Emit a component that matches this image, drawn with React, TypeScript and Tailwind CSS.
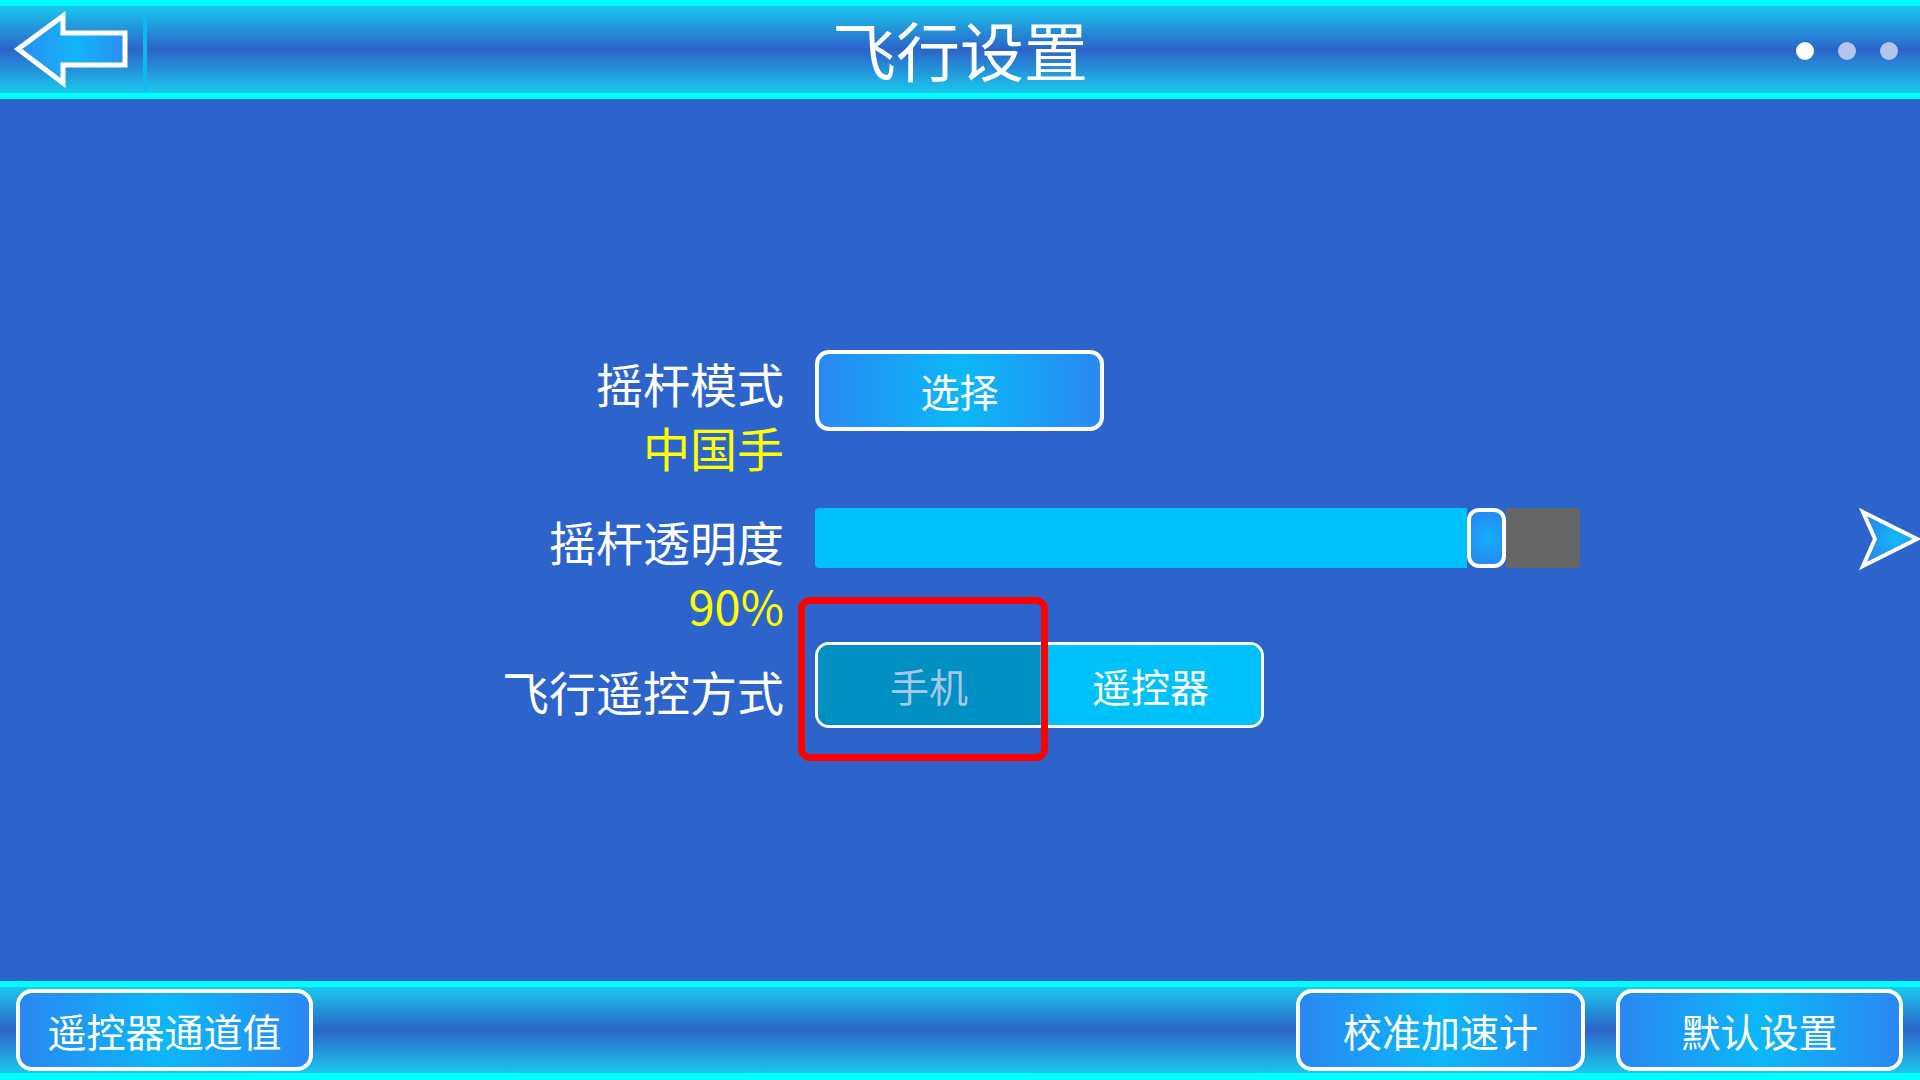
import React from 'react'

const btnGrad =
  'bg-[linear-gradient(to_right,#2a88f4,#0bb8f8_50%,#2a88f4)]'

function BackArrow() {
  return (
    <svg width="130" height="99" viewBox="0 0 130 99" className="shrink-0">
      <defs>
        <linearGradient id="backg" x1="0" y1="0" x2="1" y2="0">
          <stop offset="0" stopColor="#2a8ef5" />
          <stop offset="0.55" stopColor="#12b4f8" />
          <stop offset="1" stopColor="#2a8ef5" />
        </linearGradient>
      </defs>
      <polygon
        points="18,49 63,16 63,33 125,33 125,65 63,65 63,83"
        fill="url(#backg)"
        stroke="#ffffff"
        strokeWidth="5"
        strokeLinejoin="miter"
      />
    </svg>
  )
}

function NextArrow() {
  return (
    <svg width="62" height="64" viewBox="0 0 62 64" className="shrink-0">
      <defs>
        <radialGradient id="nextg" cx="0.6" cy="0.5" r="0.6">
          <stop offset="0" stopColor="#14b8f8" />
          <stop offset="1" stopColor="#2a84f0" />
        </radialGradient>
      </defs>
      <polygon
        points="5,5 59,32 5,59 17,32"
        fill="url(#nextg)"
        stroke="#ffffff"
        strokeWidth="4"
      />
    </svg>
  )
}

export default function App() {
  return (
    <div className="w-[1920px] h-[1080px] flex flex-col overflow-hidden bg-[#2d64cc] font-['Noto_Sans_CJK_SC','Noto_Sans',sans-serif] text-white">
      {/* header */}
      <header className="h-[99px] shrink-0 border-t-[6px] border-b-[6px] border-[#00ffff] bg-[linear-gradient(to_bottom,#1ac8ee,#2c64c9_50%,#1ac8ee)] grid grid-cols-[1fr_auto_1fr] items-center">
        <div className="flex items-center -mt-[6px]">
          <BackArrow />
          <div className="ml-[13px] mt-[6px] w-[4px] h-[76px] bg-[#12b6f2]" />
        </div>
        <h1 className="text-[64px] leading-none pb-[10px]">飞行设置</h1>
        <div className="flex justify-end items-center gap-[24px] pr-[22px] pb-[4px]">
          <span className="w-[18px] h-[18px] rounded-full bg-white" />
          <span className="w-[18px] h-[18px] rounded-full bg-[#b4c4ea]" />
          <span className="w-[18px] h-[18px] rounded-full bg-[#b4c4ea]" />
        </div>
      </header>

      {/* content */}
      <main className="flex-1 pt-[251px]">
        {/* row 1 */}
        <div className="flex items-start">
          <div className="w-[784px] text-right text-[47px] leading-[64px] pt-px">
            <div>摇杆模式</div>
            <div className="text-[#ffff00]">中国手</div>
          </div>
          <button
            className={`ml-[31px] w-[289px] h-[81px] rounded-[14px] border-[4px] border-white ${btnGrad} text-[39px] leading-none text-white`}
          >
            选择
          </button>
        </div>

        {/* row 2 */}
        <div className="flex items-start mt-[29px]">
          <div className="w-[784px] text-right text-[47px] leading-[64px] pt-px">
            <div>摇杆透明度</div>
            <div className="text-[#ffff00]">90%</div>
          </div>
          <div className="ml-[31px] w-[765px] h-[60px] flex rounded-[4px] overflow-hidden">
            <div className="w-[652px] bg-[#00c2fa]" />
            <div className="w-[39px] rounded-[12px] border-[4px] border-white bg-[radial-gradient(circle_at_55%_50%,#14aef8,#2a84f2)]" />
            <div className="flex-1 bg-[#666666]" />
          </div>
          <div className="ml-auto -mt-[1px]">
            <NextArrow />
          </div>
        </div>

        {/* row 3 */}
        <div className="flex items-start mt-[5px]">
          <div className="w-[784px] text-right text-[47px] leading-[64px] pt-[17px]">
            飞行遥控方式
          </div>
          <div className="relative ml-[31px]">
            <div className="w-[449px] h-[86px] flex rounded-[14px] border-[3px] border-white overflow-hidden text-[39px]">
              <div className="w-[222px] bg-[#0090c2] text-[#a8c6e8] flex items-center justify-center">
                手机
              </div>
              <div className="flex-1 bg-[#00c2fa] flex items-center justify-center">
                遥控器
              </div>
            </div>
            <div className="absolute left-[-17px] top-[-45px] w-[250px] h-[164px] rounded-[12px] border-[7px] border-[#ff0000]" />
          </div>
        </div>
      </main>

      {/* footer */}
      <footer className="h-[99px] shrink-0 border-t-[6px] border-b-[7px] border-[#00ffff] bg-[linear-gradient(to_bottom,#1ac8ee,#2c64c9_50%,#1ac8ee)] flex items-center pl-[16px] pr-[17px]">
        <button
          className={`w-[297px] h-[82px] rounded-[16px] border-[4px] border-white ${btnGrad} text-[39px] leading-none`}
        >
          遥控器通道值
        </button>
        <button
          className={`ml-auto w-[289px] h-[82px] rounded-[16px] border-[4px] border-white ${btnGrad} text-[39px] leading-none`}
        >
          校准加速计
        </button>
        <button
          className={`ml-[31px] w-[287px] h-[82px] rounded-[16px] border-[4px] border-white ${btnGrad} text-[39px] leading-none`}
        >
          默认设置
        </button>
      </footer>
    </div>
  )
}
